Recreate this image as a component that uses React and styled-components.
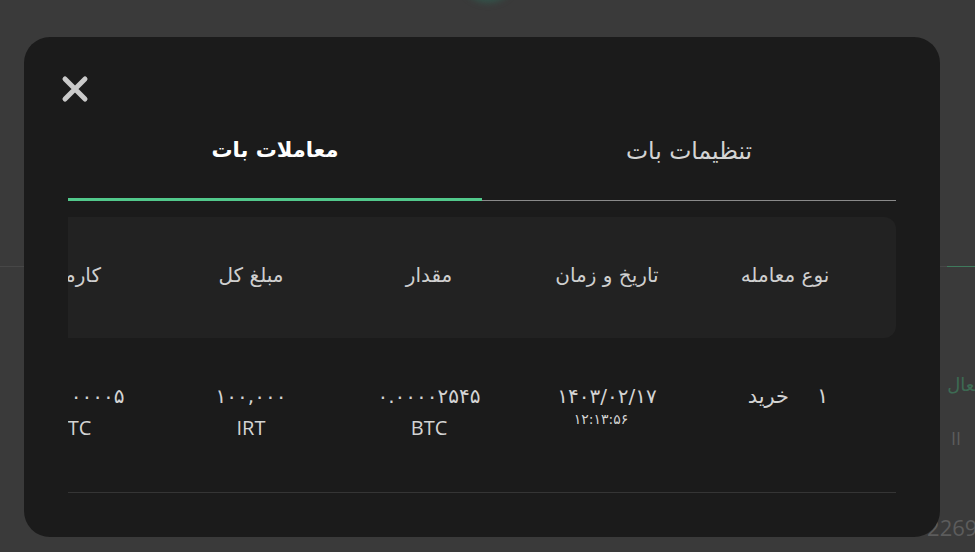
import { styled, createGlobalStyle } from 'styled-components';

const GlobalStyle = createGlobalStyle`
  html, body {
    margin: 0;
    padding: 0;
    background: #3a3a3a;
  }
  body {
    font-family: "DejaVu Sans", "Noto Sans", sans-serif;
  }
`;

const columns = ['نوع معامله', 'تاریخ و زمان', 'مقدار', 'مبلغ کل', 'کارمزد', 'وضعیت'];

const CloseIcon = () => (
  <svg width="28" height="28" viewBox="0 0 28 28" fill="none">
    <path d="M4 4 L24 24 M24 4 L4 24" stroke="#cacaca" strokeWidth="5" strokeLinecap="round" />
  </svg>
);

const App = () => {
  return (
    <>
      <GlobalStyle />
      <Page>
        <BgAvatar />
        <BgDivider />
        <BgSide>
          <BgText $green>فعال</BgText>
          <BgText $inset>II</BgText>
          <BgText $big>22690</BgText>
        </BgSide>

        <Overlay>
          <Modal>
            <CloseButton aria-label="بستن">
              <CloseIcon />
            </CloseButton>

            <Tabs>
              <Tab>تنظیمات بات</Tab>
              <Tab $active>معاملات بات</Tab>
            </Tabs>

            <ScrollArea>
              <Table>
                <HeadRow>
                  {columns.map((c) => (
                    <HeadCell key={c}>{c}</HeadCell>
                  ))}
                </HeadRow>
                <BodyRow>
                  <Cell>
                    <TypeLine>
                      <span>۱</span>
                      <span>خرید</span>
                    </TypeLine>
                  </Cell>
                  <Cell>
                    <Value>۱۴۰۳/۰۲/۱۷</Value>
                    <Time>۱۲:۱۳:۵۶</Time>
                  </Cell>
                  <Cell>
                    <Value>۰.۰۰۰۰۲۵۴۵</Value>
                    <Unit>BTC</Unit>
                  </Cell>
                  <Cell>
                    <Value>۱۰۰,۰۰۰</Value>
                    <Unit>IRT</Unit>
                  </Cell>
                  <Cell>
                    <Value>۰.۰۰۰۰۰۰۰۵</Value>
                    <Unit>BTC</Unit>
                  </Cell>
                  <Cell>
                    <Value>موفق</Value>
                  </Cell>
                </BodyRow>
              </Table>
            </ScrollArea>
          </Modal>
        </Overlay>
      </Page>
    </>
  );
};

export default App;

const Page = styled.div`
  position: relative;
  height: 100vh;
  overflow: hidden;
  background: #3a3a3a;
  display: flex;
  flex-direction: column;
`;

const BgAvatar = styled.div`
  align-self: center;
  width: 56px;
  height: 56px;
  margin-top: -53px;
  border-radius: 50%;
  background: #33534a;
  filter: blur(3px);
`;

const BgDivider = styled.div`
  margin-top: 263px;
  height: 1px;
  background: linear-gradient(to left, #3f7a5c 28px, #474747 28px);
`;

const BgSide = styled.div`
  direction: rtl;
  display: flex;
  flex-direction: column;
  align-items: flex-start;
  margin-right: -8px;
  gap: 30px;
  margin-top: 105px;
`;

const BgText = styled.span`
  color: ${(p) => (p.$green ? '#3d6a53' : '#5c5c5c')};
  font-size: ${(p) => (p.$big ? '22px' : '18px')};
  font-family: "Open Sans", "DejaVu Sans", sans-serif;
  direction: ${(p) => (p.$big ? 'ltr' : 'rtl')};
  margin-top: ${(p) => (p.$big ? '32px' : '0')};
  margin-right: ${(p) => (p.$big ? '-7px' : p.$inset ? '22px' : '0')};
`;

const Overlay = styled.div`
  position: absolute;
  inset: 0;
  padding: 37px 35px 15px 24px;
  display: flex;
`;

const Modal = styled.div`
  flex: 1;
  background: #1b1b1b;
  border-radius: 26px;
  padding: 38px 44px 0;
  display: flex;
  flex-direction: column;
  overflow: hidden;
`;

const CloseButton = styled.button`
  align-self: flex-start;
  width: 28px;
  height: 28px;
  margin-left: -7px;
  padding: 0;
  border: none;
  background: none;
  cursor: pointer;
  display: flex;
`;

const Tabs = styled.div`
  direction: rtl;
  display: grid;
  grid-template-columns: 1fr 1fr;
  margin-top: 12px;
  border-bottom: 1px solid #8a8a8a;
`;

const Tab = styled.div`
  text-align: center;
  padding: ${(p) => (p.$active ? '20px 0 36px' : '21px 0 35px')};
  line-height: 30px;
  font-size: ${(p) => (p.$active ? '21px' : '23.5px')};
  font-weight: ${(p) => (p.$active ? 700 : 400)};
  color: ${(p) => (p.$active ? '#ffffff' : '#d4d4d4')};
  box-shadow: ${(p) => (p.$active ? 'inset 0 -3px 0 #52c98c' : 'none')};
  margin-bottom: -1px;
`;

const ScrollArea = styled.div`
  direction: rtl;
  overflow: hidden;
  margin-top: 16px;
`;

const Table = styled.div`
  width: 1090px;
  display: flex;
  flex-direction: column;
`;

const HeadRow = styled.div`
  display: flex;
  height: 121px;
  align-items: center;
  padding-right: 22px;
  background: #222222;
  border-radius: 12px;
`;

const HeadCell = styled.div`
  width: 178px;
  flex: none;
  text-align: center;
  font-size: 20px;
  color: #cfcfcf;
  margin-top: -6px;
`;

const BodyRow = styled.div`
  display: flex;
  padding: 45px 22px 0 0;
  height: 155px;
  box-sizing: border-box;
  border-bottom: 1px solid #353535;
`;

const Cell = styled.div`
  width: 178px;
  flex: none;
  display: flex;
  flex-direction: column;
  align-items: center;
  color: #d4d4d4;
`;

const TypeLine = styled.div`
  display: flex;
  gap: 28px;
  font-size: 21px;
  line-height: 26px;
  margin-left: 6px;
`;

const Value = styled.div`
  font-size: 20px;
  line-height: 26px;
`;

const Time = styled.div`
  font-size: 14px;
  line-height: 20px;
  margin-right: 12px;
`;

const Unit = styled.div`
  margin-top: 6px;
  font-family: "Open Sans", sans-serif;
  font-size: 20px;
  line-height: 26px;
`;
